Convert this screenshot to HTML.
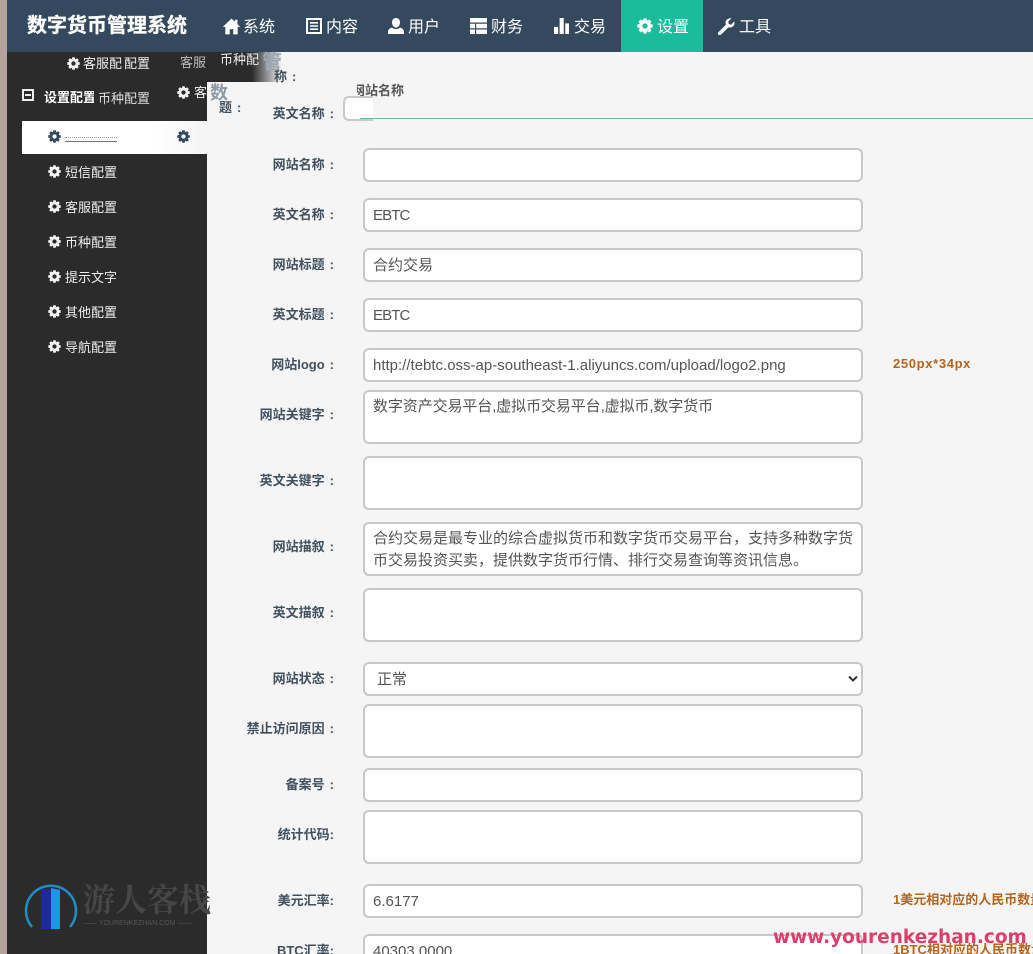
<!DOCTYPE html>
<html lang="zh"><head><meta charset="utf-8"><title>数字货币管理系统</title>
<style>
*{box-sizing:border-box}
html,body{margin:0;padding:0;width:1033px;height:954px;overflow:hidden}
#wrap{position:relative;width:1033px;height:954px;overflow:hidden;background:#f5f5f5;font-family:"Liberation Sans","Noto Sans CJK SC",sans-serif;color:#34495e}
.a{position:absolute;white-space:nowrap}
#strip{left:0;top:0;width:7px;height:954px;background:#b3a29d}
#head{left:7px;top:0;width:1026px;height:52px;background:#34495e}
#side{left:7px;top:52px;width:200px;height:902px;background:#2b2b2b}
.nav{top:17px;font-size:16px;line-height:22px;color:#fff;height:22px}
.nav svg{position:absolute;left:0;top:1px;width:17px;height:17px;fill:#fff}
.nav span{position:absolute;top:0;white-space:nowrap}
.m{font-size:13px;line-height:18px;color:#eee;left:65px}
.g{width:13px;height:13px;fill:#f2f2f2}
.l{font-size:13px;font-weight:bold;line-height:18px;color:#40505f;right:699px;text-align:right}
.l i{font-style:normal;margin-left:5px}
.f{left:363px;width:500px;background:#fff;border:2px solid #c8c8c8;border-radius:6px;font-size:15px;line-height:20px;color:#555;padding:6px 8px;white-space:normal;overflow:hidden}
.h34{height:34px}.h54{height:54px;padding-top:5px}
.note{left:893px;font-size:13px;font-weight:bold;line-height:18px;color:#b5651d}
</style></head><body>
<div id="wrap">
<svg width="0" height="0" style="position:absolute"><defs>
<symbol id="gear" viewBox="0 0 24 24"><path fill-rule="evenodd" d="M9.200 3.500 9.800.5h4.400l.6 3 1.230.51 2.550-1.700 3.110 3.110-1.700 2.550.51 1.230 3 .6v4.400l-3 .6-.51 1.230 1.700 2.550-3.110 3.110-2.550-1.700-1.230.51-.6 3H9.800l-.6-3-1.230-.51-2.550 1.700-3.110-3.110 1.700-2.550-.51-1.230-3-.6V9.800l3-.6.51-1.230-1.700-2.550 3.110-3.110 2.550 1.700zM12 8a4 4 0 1 0 0 8 4 4 0 0 0 0-8z"/></symbol>
</defs></svg>

<div class="a" id="strip"></div>
<div class="a" id="head"></div>
<div class="a" id="side"></div>

<div class="a" style="left:27px;top:13px;font-size:20px;line-height:26px;font-weight:bold;color:#fff;-webkit-text-stroke:.3px #fff">数字货币管理系统</div>

<div class="a nav" style="left:222px;width:60px"><svg viewBox="0 0 24 24" style="width:19px;height:19px;top:0"><path d="M12 2 1 12.500h3.200V22h5.600v-6.500h4.400V22h5.600v-9.500H23L19.500 9V3.500h-3V6z"/></svg><span style="left:21px">系统</span></div>
<div class="a nav" style="left:305px;width:60px"><svg viewBox="2 2 20 20" style="left:1px;width:16px;height:16px"><path fill-rule="evenodd" d="M2 2h20v20H2zM4.500 4.500v15h15v-15zM7 7h10v2H7zM7 11h10v2H7zM7 15h10v2H7z"/></svg><span style="left:21px">内容</span></div>
<div class="a nav" style="left:387px;width:60px"><svg viewBox="2 2 20 20" style="left:1px;width:16px;height:16px"><path d="M12 2c3 0 5 2.400 5 5.500S15 14 12 14 7 10.600 7 7.500 9 2 12 2zM7 14c1.400 1.200 3 1.800 5 1.800s3.600-.6 5-1.800c3 .6 5 2.500 5 5.500V22H2v-2.500C2 16.500 4 14.600 7 14z"/></svg><span style="left:21px">用户</span></div>
<div class="a nav" style="left:470px;width:60px"><svg viewBox="1 3 22 18" style="width:17px;height:16px" preserveAspectRatio="none"><path d="M1 3h22v5H1zM1 9.500h6.500v5H1zM9 9.500h14v5H9zM1 16h6.500v5H1zM9 16h14v5H9z"/></svg><span style="left:21px">财务</span></div>
<div class="a nav" style="left:553px;width:60px"><svg viewBox="2 3 20 18" style="left:1px;width:15px;height:16px" preserveAspectRatio="none"><path d="M2 13h5.500v8H2zM9.500 3H15v18H9.500zM17 9h5v12h-5z"/></svg><span style="left:21px">交易</span></div>
<div class="a" style="left:621px;top:0;width:82px;height:52px;background:#1abc9c"></div>
<div class="a nav" style="left:636px;width:60px"><svg viewBox="0 0 24 24" style="left:1px;width:16px;height:16px"><use href="#gear"/></svg><span style="left:21px">设置</span></div>
<div class="a nav" style="left:718px;width:60px"><svg viewBox="1 1 21.500 21.500"><path d="M21.500 5.500 17.500 9.500 14.500 8.500 14 5.500 18 1.500C14.500.500 10.500 3 10.500 7c0 1 .2 1.700.5 2.500L1.500 19c-1 1-1 2.300 0 3.200s2.200 1 3.200 0l9.500-9.500c4.500 1.500 9-2.500 7.300-7.200z"/></svg><span style="left:21px">工具</span></div>

<!-- sidebar smudged artefacts -->
<svg class="a g" style="left:67px;top:57px"><use href="#gear"/></svg>
<div class="a m" style="left:83px;top:55px">客服配</div>
<div class="a m" style="left:124px;top:55px">配置</div>
<div class="a m" style="left:180px;top:54px;color:#bbb;width:27px;overflow:hidden">客服配置</div>
<div class="a" style="left:207px;top:52px;width:75px;height:30px;background:linear-gradient(90deg,#2b2b2b 0,#2b2b2b 60%,rgba(43,43,43,0) 100%)"></div>
<div class="a m" style="left:220px;top:51px;color:#eee">币种配</div>
<div class="a" style="left:262px;top:50px;font-size:20px;line-height:26px;font-weight:bold;color:#9aa7b3">管</div>
<svg class="a g" style="left:177px;top:86px"><use href="#gear"/></svg>
<div class="a m" style="left:194px;top:84px;width:13px;overflow:hidden">客服</div>
<div class="a" style="left:210px;top:81px;font-size:18px;line-height:24px;font-weight:bold;color:#8c98a4">数</div>
<div class="a" style="left:22px;top:89px;width:12px;height:12px;border:2px solid #eee"></div>
<div class="a" style="left:25px;top:94px;width:6px;height:2px;background:#eee"></div>
<div class="a m" style="left:44px;top:89px;font-weight:bold;color:#fff;width:50px;overflow:hidden">设置配置</div>
<div class="a m" style="left:98px;top:90px;color:#ddd">币种配置</div>

<div class="a" style="left:22px;top:121px;width:185px;height:33px;background:linear-gradient(90deg,#fff 0,#fff 70%,#f5f5f5 100%)"></div>
<svg class="a g" style="left:48px;top:130px;fill:#34495e"><use href="#gear"/></svg>
<div class="a" style="left:65px;top:137px;width:52px;height:5px;border-bottom:1px solid #777;border-top:1px dotted #999"></div>
<svg class="a g" style="left:177px;top:130px;fill:#34495e"><use href="#gear"/></svg>

<svg class="a g" style="left:48px;top:165px"><use href="#gear"/></svg><div class="a m" style="top:164px">短信配置</div>
<svg class="a g" style="left:48px;top:200px"><use href="#gear"/></svg><div class="a m" style="top:199px">客服配置</div>
<svg class="a g" style="left:48px;top:235px"><use href="#gear"/></svg><div class="a m" style="top:234px">币种配置</div>
<svg class="a g" style="left:48px;top:270px"><use href="#gear"/></svg><div class="a m" style="top:269px">提示文字</div>
<svg class="a g" style="left:48px;top:305px"><use href="#gear"/></svg><div class="a m" style="top:304px">其他配置</div>
<svg class="a g" style="left:48px;top:340px"><use href="#gear"/></svg><div class="a m" style="top:339px">导航配置</div>

<!-- smeared top of form -->
<div class="a l" style="top:68px;left:274px;right:auto">称<i>:</i></div>
<div class="a l" style="top:99px;left:219px;right:auto">题<i>:</i></div>
<div class="a l" style="top:105px">英文名称<i>:</i></div>
<div class="a" style="left:357px;top:82px;font-size:13px;line-height:18px;color:#555;font-weight:bold;width:47px;overflow:hidden;direction:rtl">网站名称</div>
<div class="a" style="left:343px;top:96px;width:30px;height:25px;background:#fff;border:2px solid #c8c8c8;border-right:0;border-radius:6px 0 0 6px"></div>
<div class="a" style="left:360px;top:118px;width:673px;height:1px;background:#6db9a6"></div>

<div class="a l" style="top:156px">网站名称<i>:</i></div><div class="a f h34" style="top:148px"></div>
<div class="a l" style="top:206px">英文名称<i>:</i></div><div class="a f h34" style="top:198px;letter-spacing:-.9px">EBTC</div>
<div class="a l" style="top:256px">网站标题<i>:</i></div><div class="a f h34" style="top:248px">合约交易</div>
<div class="a l" style="top:306px">英文标题<i>:</i></div><div class="a f h34" style="top:298px;letter-spacing:-.9px">EBTC</div>
<div class="a l" style="top:356px">网站logo<i>:</i></div><div class="a f h34" style="top:348px">http://tebtc.oss-ap-southeast-1.aliyuncs.com/upload/logo2.png</div>
<div class="a note" style="top:355px;letter-spacing:.65px">250px*34px</div>
<div class="a l" style="top:406px">网站关键字<i>:</i></div><div class="a f h54" style="top:390px;letter-spacing:-.1px">数字资产交易平台,虚拟币交易平台,虚拟币,数字货币</div>
<div class="a l" style="top:472px">英文关键字<i>:</i></div><div class="a f h54" style="top:456px"></div>
<div class="a l" style="top:538px">网站描叙<i>:</i></div><div class="a f h54" style="top:522px;line-height:22px;padding-top:4px;padding-right:6px">合约交易是最专业的综合虚拟货币和数字货币交易平台，支持多种数字货币交易投资买卖，提供数字货币行情、排行交易查询等资讯信息。</div>
<div class="a l" style="top:604px">英文描叙<i>:</i></div><div class="a f h54" style="top:588px"></div>
<div class="a l" style="top:670px">网站状态<i>:</i></div><div class="a f h34" style="top:662px;padding-left:12px">正常<svg style="position:absolute;right:3px;top:11px" width="10" height="8" viewBox="0 0 10 8"><path d="M1 1.500 5 5.500 9 1.500" fill="none" stroke="#333" stroke-width="2"/></svg></div>
<div class="a l" style="top:720px">禁止访问原因<i>:</i></div><div class="a f h54" style="top:704px"></div>
<div class="a l" style="top:776px">备案号<i>:</i></div><div class="a f h34" style="top:768px"></div>
<div class="a l" style="top:826px">统计代码:</div><div class="a f h54" style="top:810px"></div>
<div class="a l" style="top:892px">美元汇率:</div><div class="a f h34" style="top:884px">6.6177</div>
<div class="a note" style="top:891px">1美元相对应的人民币数量</div>
<div class="a l" style="top:942px">BTC汇率:</div><div class="a f h34" style="top:934px">40303.0000</div>
<div class="a note" style="top:941px">1BTC相对应的人民币数量</div>

<!-- watermark -->
<svg class="a" style="left:24px;top:878px" width="54" height="52" viewBox="0 0 54 52"><path d="M8 49A25 25 0 1 1 46 49" fill="none" stroke="#1d8fc4" stroke-width="2.500"/><path d="M17 11h10v40H17z" fill="#1c2a9c"/><path d="M27 10l9 2v39h-9z" fill="#149be8"/></svg>
<div class="a" style="left:83px;top:881px;font-family:'Liberation Serif','Noto Serif CJK SC',serif;font-size:32px;line-height:38px;font-weight:bold;color:#474747">游人客栈</div>
<div class="a" style="left:83px;top:919px;font-size:7px;line-height:9px;color:#555">—— YOURENKEZHAN.COM ——</div>
<div class="a" style="left:773px;top:926px;font-family:'DejaVu Sans',sans-serif;font-size:18.500px;line-height:24px;font-weight:bold;color:#dc3f6c">www.yourenkezhan.com</div>
</div>
</body></html>
